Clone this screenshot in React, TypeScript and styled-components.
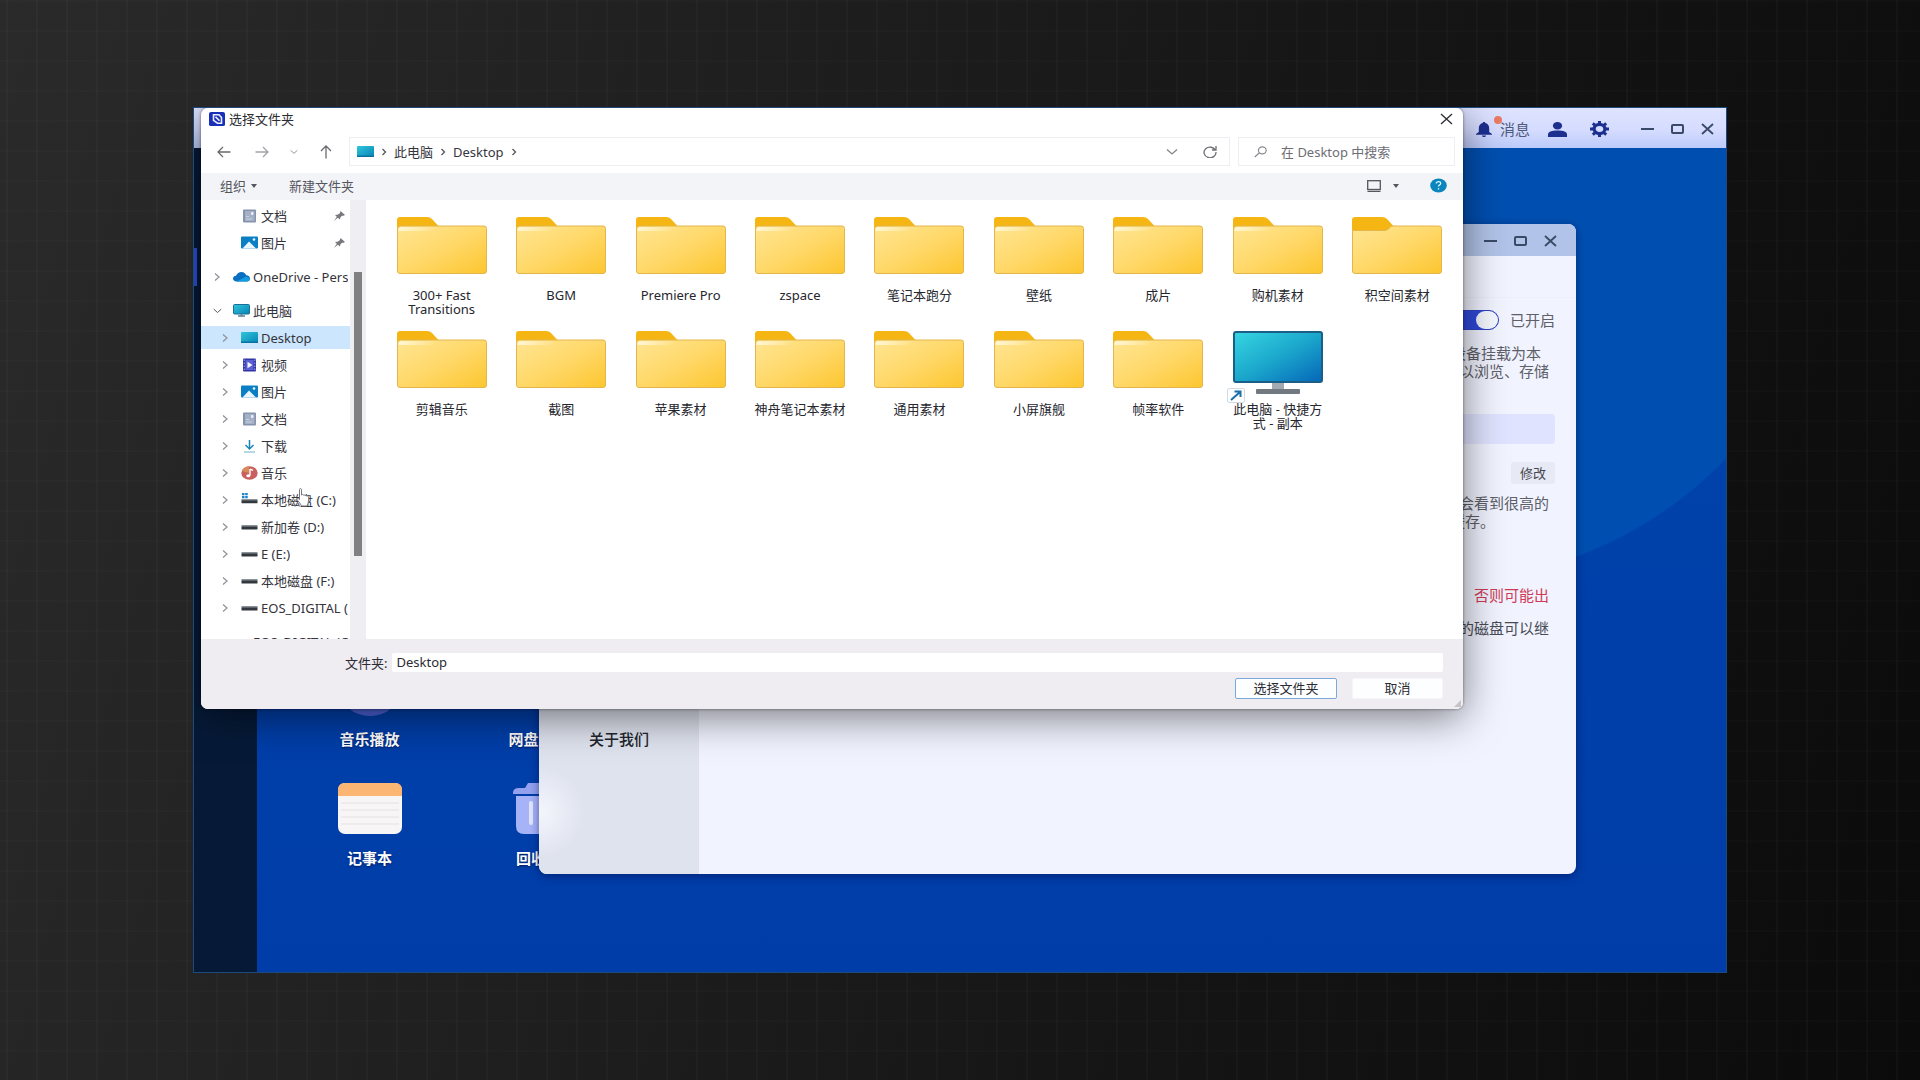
import React from "react";
import styled, { createGlobalStyle, css } from "styled-components";

const GlobalStyle = createGlobalStyle`
  * { box-sizing: border-box; }
  body {
    margin: 0;
    font-family: "Noto Sans", "Noto Sans CJK SC", sans-serif;
    font-size: 13px;
    line-height: 18px;
    color: #2b2b33;
  }
  button, input { font: inherit; color: inherit; }
  ul { list-style: none; margin: 0; padding: 0; }
  svg { display: block; flex: none; }
`;

/* ---------- stage and desktop ---------- */

const Stage = styled.div`
  min-height: 100vh;
  display: flex;
  padding: 107px 193px;
  background:
    repeating-linear-gradient(90deg, transparent 0 6px, rgba(255, 255, 255, 0.022) 6px 8px, transparent 8px 30px),
    repeating-linear-gradient(180deg, rgba(255, 255, 255, 0.01) 0 2px, transparent 2px 30px),
    linear-gradient(105deg, #2a2a2a 0%, #222222 25%, #131314 70%, #0b0b0c 100%);
`;

const Desktop = styled.main`
  position: relative;
  flex: 1;
  display: flex;
  flex-direction: column;
  overflow: hidden;
  border: 1px solid #1c4a7c;
  background:
    radial-gradient(circle at 81% 8%, #004fb0 404px, transparent 406px),
    linear-gradient(180deg, #0048ac 0%, #003fa9 60%, #003da8 100%);
`;

const TopBar = styled.header`
  display: flex;
  align-items: center;
  justify-content: flex-end;
  height: 40px;
  padding: 2px 12px 0 0;
  color: #1d2f8f;
  background: linear-gradient(180deg, #dfe3ff 0%, #d5dcff 55%, #bccafa 100%);
`;

const plainButton = css`
  display: flex;
  align-items: center;
  justify-content: center;
  padding: 0;
  border: 0;
  background: none;
`;

const MessageButton = styled.button`
  ${plainButton}
  position: relative;
  gap: 8px;
  margin-right: 18px;
  font-size: 15px;
  span { color: #4f5a7c; }
`;

const Dot = styled.i`
  position: absolute;
  left: 18px;
  top: -4px;
  width: 8px;
  height: 8px;
  border-radius: 50%;
  background: #ea7a63;
`;

const IconButton = styled.button<{ $w?: number }>`
  ${plainButton}
  width: ${(p) => (p.$w ? `${p.$w}px` : "auto")};
  height: 28px;
`;

const AppActions = styled.div`
  display: flex;
  align-items: center;
  gap: 23px;
  margin-right: 32px;
`;

const Controls = styled.div`
  display: flex;
  gap: 17px;
  color: #3a4a66;
`;

const DesktopBody = styled.div`
  flex: 1;
  display: flex;
`;

const Rail = styled.nav`
  width: 63px;
  padding-top: 100px;
  background: #061a38;
`;

const RailMark = styled.div`
  width: 3px;
  height: 38px;
  background: #2c50dc;
`;

const IconGrid = styled.ul`
  flex: 1;
  display: grid;
  grid-template-columns: repeat(auto-fill, 169px);
  grid-auto-rows: 119px;
  align-content: end;
  padding: 0 0 70px 28px;
`;

const DesktopIcon = styled.li`
  display: flex;
  flex-direction: column;
  align-items: center;
  gap: 13px;
  color: #ffffff;
  font-size: 15px;
  font-weight: 700;
  line-height: 20px;
  text-shadow: 0 1px 2px rgba(0, 0, 40, 0.6);
`;

/* ---------- settings window ---------- */

const Settings = styled.section`
  position: absolute;
  top: 116px;
  left: 345px;
  right: 150px;
  height: 650px;
  display: flex;
  flex-direction: column;
  overflow: hidden;
  border-radius: 8px;
  background: #f1f3ff;
  box-shadow: 0 2px 8px rgba(0, 10, 70, 0.5);
`;

const SettingsBar = styled.header`
  display: flex;
  align-items: center;
  justify-content: flex-end;
  height: 32px;
  padding: 2px 19px 0 0;
  background: #b1c3e8;
`;

const SettingsBody = styled.div`
  flex: 1;
  display: flex;
`;

const SettingsMenu = styled.nav`
  width: 160px;
  display: flex;
  flex-direction: column;
  align-items: center;
  justify-content: flex-end;
  padding-bottom: 124px;
  background:
    radial-gradient(circle at 0 90%, #f4f6fd 0, rgba(244, 246, 253, 0) 46px),
    #dfe3ee;
`;

const MenuLink = styled.a`
  color: #22242c;
  font-size: 15px;
  font-weight: 500;
  line-height: 22px;
  text-decoration: none;
`;

const SettingsMain = styled.div`
  flex: 1;
`;

const TabStrip = styled.div`
  height: 42px;
  border-bottom: 1px solid #eceef8;
`;

const Pane = styled.div`
  display: flex;
  flex-direction: column;
  align-items: flex-end;
  padding: 12px 21px 0;
  font-size: 15px;
  color: #5d6069;
`;

const ToggleLabel = styled.label`
  display: flex;
  align-items: center;
  gap: 11px;
  height: 20px;
`;

const Toggle = styled.input`
  appearance: none;
  display: flex;
  justify-content: flex-end;
  width: 46px;
  height: 20px;
  margin: 0;
  border: 1px solid #2f44c4;
  border-radius: 10px;
  background: #3049dc;
  &::before {
    content: "";
    width: 22px;
    height: 18px;
    border-radius: 9px;
    background: #f6f8ff;
  }
`;

const Note = styled.p<{ $gap: number; $red?: boolean; $dark?: boolean }>`
  display: flex;
  flex-direction: column;
  align-items: flex-end;
  margin: ${(p) => p.$gap}px 0 0;
  color: ${(p) => (p.$red ? "#cf3a55" : p.$dark ? "#4a4c55" : "#5d6069")};
`;

const NoteLine = styled.span<{ $trail?: number }>`
  padding-right: ${(p) => p.$trail ?? 6}px;
`;

const PathInput = styled.input`
  width: 100%;
  height: 30px;
  margin-top: 34px;
  border: 0;
  border-radius: 4px;
  background: #e0e3ff;
`;

const EditButton = styled.button`
  ${plainButton}
  width: 44px;
  height: 22px;
  margin-top: 18px;
  border-radius: 3px;
  background: #e7e9f4;
  color: #44474f;
  font-size: 13px;
`;

/* ---------- folder dialog ---------- */

const Dialog = styled.section`
  position: absolute;
  top: 0;
  left: 7px;
  right: 263px;
  height: 601px;
  display: flex;
  flex-direction: column;
  overflow: hidden;
  border-radius: 7px;
  background: #ffffff;
`;

const DialogShadow = styled.div`
  position: absolute;
  top: 0;
  left: 7px;
  right: 263px;
  height: 601px;
  border-radius: 7px;
  box-shadow: 0 8px 40px rgba(0, 0, 0, 0.5), 0 0 3px rgba(0, 0, 0, 0.5);
`;

const TitleBar = styled.header`
  display: flex;
  align-items: center;
  gap: 4px;
  height: 22px;
  padding: 0 10px 0 8px;
`;

const Title = styled.h1`
  flex: 1;
  margin: 0;
  font-size: 13px;
  font-weight: 400;
  line-height: 18px;
`;

const NavRow = styled.div`
  display: flex;
  align-items: center;
  gap: 8px;
  height: 43px;
  padding: 0 8px;
  color: #6f6f76;
`;

const boxed = css`
  display: flex;
  align-items: center;
  height: 29px;
  border: 1px solid #eeeef2;
`;

const Address = styled.div`
  ${boxed}
  flex: 1;
  gap: 6px;
  padding: 0 7px;
`;

const Crumb = styled.button`
  ${plainButton}
  color: #35353d;
`;

const AddressTools = styled.div`
  display: flex;
  gap: 14px;
  margin-left: auto;
`;

const SearchBox = styled.label`
  ${boxed}
  gap: 14px;
  width: 217px;
  padding-left: 15px;
  color: #8a8a92;
`;

const SearchInput = styled.input`
  flex: 1;
  min-width: 0;
  padding: 0;
  border: 0;
  background: none;
  &::placeholder { color: #6d6d74; opacity: 1; }
`;

const Toolbar = styled.div`
  display: flex;
  align-items: center;
  height: 27px;
  padding: 0 16px 2px 19px;
  background: #f3f4f8;
  color: #55555e;
`;

const ToolButton = styled.button<{ $end?: number; $push?: boolean }>`
  ${plainButton}
  gap: 5px;
  margin-left: ${(p) => (p.$push ? "auto" : "0")};
  margin-right: ${(p) => p.$end ?? 0}px;
`;

const ViewButton = styled(ToolButton)`
  gap: 12px;
`;

const DialogBody = styled.div`
  flex: 1;
  min-height: 0;
  display: flex;
`;

const Tree = styled.ul`
  width: 149px;
  overflow: hidden;
  padding-top: 2px;
`;

const TreeRow = styled.li<{ $child?: boolean; $selected?: boolean; $spaced?: boolean }>`
  display: flex;
  align-items: center;
  height: 27px;
  margin-top: ${(p) => (p.$spaced ? 7 : 0)}px;
  padding: 0 2px 0 ${(p) => (p.$child ? 20 : 12)}px;
  border: solid #ffffff;
  border-width: 2px 0;
  background: ${(p) => (p.$selected ? "#cbe6fd" : "transparent")};
  color: #34343c;
  line-height: 16px;
  white-space: nowrap;
`;

const TreeChevron = styled.span`
  width: 8px;
  margin-right: 12px;
  color: #909098;
`;

const TreeName = styled.span`
  flex: 1;
  min-width: 0;
  overflow: hidden;
  margin-left: 3px;
`;

const PinMark = styled.span`
  margin-right: 3px;
`;

const ScrollTrack = styled.div`
  width: 16px;
  padding: 72px 4px 0;
  background: #efeff3;
`;

const ScrollThumb = styled.div`
  height: 284px;
  background: #808083;
`;

const Files = styled.ul`
  flex: 1;
  display: grid;
  grid-template-columns: repeat(9, 1fr);
  grid-auto-rows: 114px;
  padding: 17px 6px 0 16px;
`;

const FileTile = styled.li`
  display: flex;
  flex-direction: column;
  align-items: center;
  gap: 7px;
  color: #26262e;
  line-height: 14px;
  text-align: center;
`;

const FileArt = styled.div`
  position: relative;
  height: 64px;
`;

const ShortcutBadge = styled.span`
  position: absolute;
  left: -6px;
  bottom: -8px;
`;

const FileName = styled.span`
  width: 94px;
`;

const Footer = styled.footer`
  display: flex;
  flex-direction: column;
  gap: 6px;
  height: 70px;
  padding: 14px 20px 0 144px;
  background: #efedf1;
`;

const FieldRow = styled.div`
  display: flex;
  align-items: center;
  gap: 5px;
  height: 19px;
`;

const FolderInput = styled.input`
  flex: 1;
  height: 19px;
  padding: 0 4px 2px;
  border: 0;
  border-radius: 2px;
  background: #ffffff;
`;

const ActionRow = styled.div`
  display: flex;
  justify-content: flex-end;
  gap: 15px;
`;

const ActionButton = styled.button<{ $primary?: boolean }>`
  ${plainButton}
  width: ${(p) => (p.$primary ? 102 : 91)}px;
  height: 21px;
  padding-bottom: 1px;
  border: 1px solid ${(p) => (p.$primary ? "#7ba9dc" : "#f6f6f8")};
  border-radius: 2px;
  background: #fdfeff;
`;

const Grip = styled.span`
  position: absolute;
  right: 2px;
  bottom: 2px;
`;

const Pointer = styled.div`
  position: absolute;
  left: 102px;
  top: 380px;
`;

/* ---------- drawings ---------- */

const Minus = () => (
  <svg width="13" height="12" viewBox="0 0 13 12"><path d="M0 6h13" stroke="currentColor" strokeWidth="2" /></svg>
);
const Maximize = () => (
  <svg width="13" height="12" viewBox="0 0 13 12"><rect x="1" y="2" width="11" height="8" rx="1" fill="none" stroke="currentColor" strokeWidth="2" /></svg>
);
const Cross = ({ thin }: { thin?: boolean }) => (
  <svg width="13" height="12" viewBox="0 0 13 12"><path d="M1 1l11 10M12 1L1 11" stroke="currentColor" strokeWidth={thin ? 1.3 : 1.8} /></svg>
);
const Bell = () => (
  <svg width="16" height="15" viewBox="0 0 16 15" fill="currentColor">
    <path d="M8 0c.8 0 1.3.5 1.4 1.1C12 1.700 13.200 3.800 13.200 6.200V10L16 12v.8H0V12l2.800-2V6.200C2.800 3.800 4 1.700 6.600 1.100 6.700.5 7.200 0 8 0zM6 13.400h4c-.2 1-1 1.600-2 1.600s-1.800-.6-2-1.600z" />
  </svg>
);
const Person = () => (
  <svg width="19" height="15" viewBox="0 0 19 15" fill="currentColor">
    <ellipse cx="9.500" cy="3.800" rx="4.600" ry="3.800" />
    <path d="M0 15v-2.500C0 10 3.500 8.600 9.500 8.600S19 10 19 12.500V15z" />
  </svg>
);
const Gear = () => (
  <svg width="19" height="16" viewBox="0 0 19 16">
    <g fill="none" stroke="currentColor">
      <ellipse cx="9.500" cy="8" rx="5.400" ry="4.600" strokeWidth="3.200" />
      <path d="M9.500 0v3M9.500 13v3M0 8h3M16 8h3M2.800 2.400l2.400 2M13.800 11.600l2.400 2M16.200 2.400l-2.400 2M5.200 11.600l-2.400 2" strokeWidth="3" />
    </g>
  </svg>
);
const Logo = () => (
  <svg width="16" height="14" viewBox="0 0 16 15" preserveAspectRatio="none">
    <rect width="16" height="15" rx="2" fill="#1a2fb8" />
    <path d="M4.500 3h5.500l2.500 3v6H8.500L4.500 9z" fill="none" stroke="#e8ecff" strokeWidth="1.600" />
    <path d="M6.500 5l4 4.500" stroke="#e8ecff" strokeWidth="1.600" />
  </svg>
);
const Arrow = ({ turn, faint }: { turn: number; faint?: boolean }) => (
  <svg width="14" height="14" viewBox="0 0 14 14" fill="none" stroke={faint ? "#a2a2a8" : "#6a6a70"} strokeWidth="1.300" transform={`rotate(${turn})`}>
    <path d="M13.500 7H1M6 2L1 7l5 5" />
  </svg>
);
const ChevronDown = ({ w = 12, color = "#85858c" }: { w?: number; color?: string }) => (
  <svg width={w} height="8" viewBox="0 0 12 8" fill="none" stroke={color} strokeWidth="1.300"><path d="M1 1.500l5 4.500 5-4.500" /></svg>
);
const ChevronRight = ({ color = "#909098" }: { color?: string }) => (
  <svg width="8" height="8" viewBox="0 0 8 8" fill="none" stroke={color} strokeWidth="1.200"><path d="M2 0.500L6 4 2 7.500" /></svg>
);
const Crumbs = () => (
  <svg width="8" height="8" viewBox="0 0 8 8" fill="none" stroke="#55555c" strokeWidth="1.300"><path d="M2.500 1L5.500 4l-3 3" /></svg>
);
const Refresh = () => (
  <svg width="14" height="13" viewBox="0 0 14 13" fill="none" stroke="#6f6f76" strokeWidth="1.300"><path d="M12.600 5.500A6 5.300 0 1 0 13 7M13 1v4H9" /></svg>
);
const Magnifier = () => (
  <svg width="13" height="12" viewBox="0 0 13 12" fill="none" stroke="currentColor" strokeWidth="1.200"><ellipse cx="8.300" cy="4.300" rx="3.900" ry="3.500" /><path d="M5.400 6.800L.8 11" /></svg>
);
const Caret = () => (
  <svg width="6" height="4" viewBox="0 0 6 4"><path d="M0 0h6L3 4z" fill="#55555e" /></svg>
);
const ViewIcon = () => (
  <svg width="14" height="12" viewBox="0 0 14 12" fill="none" stroke="#55555e"><rect x=".7" y=".7" width="12.600" height="8.800" strokeWidth="1.300" /><path d="M.5 11.300h13" strokeWidth="1.200" /></svg>
);
const Help = () => (
  <svg width="17" height="15" viewBox="0 0 17 15">
    <ellipse cx="8.500" cy="7.500" rx="8.300" ry="7" fill="#0a86bd" />
    <path d="M6.300 5.600c0-1.300 1-2 2.200-2s2.200.7 2.200 1.800c0 1.500-2.200 1.500-2.200 3.200M8.500 10v1.500" fill="none" stroke="#d5f2ff" strokeWidth="1.300" />
  </svg>
);
const Pin = () => (
  <svg width="11" height="10" viewBox="0 0 11 10" fill="#77777e"><path d="M6.500 0L11 4 9.500 4.800 8 4.700 6.300 6.500 6 8.500 3.800 6.700 0 10l2.800-4.200L1 4l2.500-.2L5.800 2.200z" /></svg>
);

const DesktopGlyph = () => (
  <svg width="17" height="13" viewBox="0 0 17 13">
    <defs><linearGradient id="deskG" x1="0" y1="0" x2="1" y2="1"><stop offset="0" stopColor="#2fc6dc" /><stop offset="1" stopColor="#0883b4" /></linearGradient></defs>
    <rect y="1" width="17" height="11" rx="1" fill="url(#deskG)" /><rect y="10.500" width="17" height="1.500" fill="#08739f" />
  </svg>
);
const PcGlyph = () => (
  <svg width="17" height="13" viewBox="0 0 17 13">
    <rect x=".5" y=".5" width="16" height="9.500" rx="1" fill="url(#deskG)" stroke="#1b6f96" /><path d="M5 12h7M8.500 10v2" stroke="#5d7f90" strokeWidth="1.500" />
  </svg>
);
const CloudGlyph = () => (
  <svg width="17" height="13" viewBox="0 0 17 13">
    <path d="M3.500 11.500C1.500 11.500 0 10.300 0 8.600 0 7 1.300 5.900 3 5.800 4 3.500 6 2 8.500 2c2.300 0 4 1.300 4.700 3.300C15.500 5.300 17 6.700 17 8.500c0 1.800-1.300 3-3.200 3z" fill="#0a6fc0" />
    <path d="M3.500 11.500L13 6.500l4 2c0 1.800-1.300 3-3.200 3z" fill="#159be0" />
  </svg>
);
const DocGlyph = () => (
  <svg width="17" height="14" viewBox="0 0 17 14"><rect x="2" y=".5" width="13" height="13" rx="1" fill="#8593ac" /><rect x="4" y="2" width="9.500" height="10" fill="#a3b0c6" /><path d="M10.500 3.500h1.500v2h-1.500z" fill="#e7edf6" stroke="#e7edf6" /><path d="M5 7.500h3M5 10h6" stroke="#c5d0e0" /></svg>
);
const PictureGlyph = () => (
  <svg width="17" height="13" viewBox="0 0 17 13"><rect y=".5" width="17" height="12" rx="1" fill="#0b7fc4" /><path d="M1.500 12.500L8 5.500l7 7z" fill="#eaf6ff" /><circle cx="13" cy="3.500" r="1.300" fill="#eaf6ff" /></svg>
);
const VideoGlyph = () => (
  <svg width="17" height="14" viewBox="0 0 17 14"><rect x="2" y=".5" width="13" height="13" rx="1" fill="#3235a5" /><rect x="4.500" y="2" width="8" height="10" fill="#5a60d2" /><path d="M6.500 3.800l5 3.200-5 3.200z" fill="#f2f3ff" /><path d="M3.200 1.500v11M13.800 1.500v11" stroke="#a3a7ee" strokeDasharray="1.500 1.500" /></svg>
);
const DownloadGlyph = () => (
  <svg width="17" height="14" viewBox="0 0 17 14" fill="none"><path d="M8.500 1v8.500M4.500 6l4 4 4-4" stroke="#1a84b8" strokeWidth="1.500" /><path d="M3 13h11" stroke="#8fc3cf" strokeWidth="1.300" /></svg>
);
const MusicGlyph = () => (
  <svg width="17" height="14" viewBox="0 0 17 14"><ellipse cx="8.500" cy="7" rx="8.200" ry="6.800" fill="#c9605f" /><path d="M1 5a8.200 6.800 0 0 1 7-4.800V7z" fill="#d98a58" /><path d="M9 3v6.500M9 3.200l3 1.200" stroke="#fff" strokeWidth="1.400" fill="none" /><ellipse cx="7.300" cy="9.700" rx="2" ry="1.500" fill="#fff" /></svg>
);
const DriveGlyph = () => (
  <svg width="17" height="13" viewBox="0 0 17 13"><rect x=".5" y="5" width="16" height="2" fill="#8c9298" /><rect x=".5" y="6.500" width="16" height="3" rx=".5" fill="#33383f" /></svg>
);
const SystemDriveGlyph = () => (
  <svg width="17" height="13" viewBox="0 0 17 13"><path d="M1 0h2.500v2.300H1zM4.200 0h2.500v2.300H4.200zM1 3h2.500v2.300H1zM4.200 3h2.500v2.300H4.200z" fill="#1a84c8" /><rect x=".5" y="6" width="16" height="1.500" fill="#8c9298" /><rect x=".5" y="7.200" width="16" height="3" rx=".5" fill="#33383f" /></svg>
);

const FolderArt = ({ plain }: { plain?: boolean }) => (
  <svg width="90" height="58" viewBox="0 0 90 58">
    <defs>
      <linearGradient id="folderG" x1="0" y1="0" x2="1" y2="1"><stop offset="0" stopColor="#ffe592" /><stop offset=".5" stopColor="#ffd869" /><stop offset="1" stopColor="#fcc62f" /></linearGradient>
      <linearGradient id="shineG" x1="0" y1="0" x2="1" y2="0"><stop offset="0" stopColor="#fff6d2" /><stop offset="1" stopColor="#fff6d2" stopOpacity="0" /></linearGradient>
    </defs>
    <path d="M0 3q0-3 3-3h27q3 0 5 2l6 6.500V20H0z" fill="#f5b613" />
    {plain ? (
      <path d="M.5 13.500H32q3 0 5-2l2.500-2.500H87q2.500 0 2.500 2.500V54q0 2.500-2.500 2.500H3Q.5 56.500.5 54z" fill="url(#folderG)" stroke="#e2b64c" />
    ) : (
      <>
        <path d="M.5 12q0-3 3-3H87q2.500 0 2.500 2.500V54q0 2.500-2.500 2.500H3Q.5 56.500.5 54z" fill="url(#folderG)" stroke="#e2b64c" />
        <path d="M1.500 13q0-3 3-3H40l-6 4H1.500z" fill="url(#shineG)" />
      </>
    )}
  </svg>
);
const MonitorArt = () => (
  <svg width="90" height="64" viewBox="0 0 90 64">
    <defs><linearGradient id="monG" x1="0" y1="0" x2="1" y2="1"><stop offset="0" stopColor="#37d6e2" /><stop offset=".5" stopColor="#1ba7cc" /><stop offset="1" stopColor="#0566b8" /></linearGradient></defs>
    <rect x="39" y="50" width="12" height="9" fill="#a3aab2" />
    <rect x="23" y="58" width="44" height="5" rx="1" fill="#737980" />
    <rect x="1" y="1" width="88" height="50" rx="2" fill="url(#monG)" stroke="#1b5f86" strokeWidth="2" />
  </svg>
);
const ShortcutArt = () => (
  <svg width="18" height="15" viewBox="0 0 18 15"><rect x=".5" y=".5" width="17" height="14" rx="1.500" fill="#fbfdff" stroke="#d5dbe2" /><path d="M4 12l9-8M7.500 3.500H13.500V9" fill="none" stroke="#1c6fa8" strokeWidth="2" /></svg>
);

const MusicPlayerArt = () => (
  <svg width="64" height="52" viewBox="0 0 64 52"><ellipse cx="32" cy="26" rx="30" ry="26" fill="#4d62d8" /><ellipse cx="32" cy="26" rx="10" ry="9" fill="#c8d0ff" /></svg>
);
const CloudDiskArt = () => (
  <svg width="64" height="52" viewBox="0 0 64 52"><path d="M14 42a12 12 0 0 1 0-24 18 16 0 0 1 34-2 13 13 0 0 1 2 26z" fill="#8fa6ff" /></svg>
);
const NotebookArt = () => (
  <svg width="64" height="52" viewBox="0 0 64 52">
    <rect width="64" height="51" rx="7" fill="#f7f5f6" />
    <path d="M0 13V7q0-7 7-7h50q7 0 7 7v6z" fill="#fbb673" />
    <path d="M3 20h58M3 27h58M3 34h58M3 41h58" stroke="#e6e1e2" />
  </svg>
);
const TrashArt = () => (
  <svg width="52" height="52" viewBox="0 0 52 52">
    <path d="M0 10q0-5 6-5h6l3-5h22l3 5h6q6 0 6 5v1H0z" fill="#93a1ee" />
    <path d="M3 13h46v30q0 8-8 8H11q-8 0-8-8z" fill="#a7b3f7" />
    <path d="M18 20v20M34 20v20" stroke="#dfe5ff" strokeWidth="4" strokeLinecap="round" />
  </svg>
);
const HandArt = () => (
  <svg width="14" height="19" viewBox="0 0 14 19"><path d="M3.500 1.500c0-1.200 2-1.200 2 0V7c1-.8 2-.5 2.300.3 1-.5 2-.2 2.200.6 1.500-.5 2.500.2 2.500 1.600 0 2.500.3 5-1.500 8.500H5.500C4.500 15 1.500 13 1 11.500c-.3-1.300 1-1.500 2.500 0z" fill="#ffffff" stroke="#77777c" strokeWidth="1" /></svg>
);

/* ---------- data ---------- */

type Node = { name: string; icon: React.ReactNode; level: 0 | 1; mark?: "closed" | "open" | "pin"; spaced?: boolean; selected?: boolean };

const tree: Node[] = [
  { name: "文档", icon: <DocGlyph />, level: 1, mark: "pin" },
  { name: "图片", icon: <PictureGlyph />, level: 1, mark: "pin" },
  { name: "OneDrive - Personal", icon: <CloudGlyph />, level: 0, mark: "closed", spaced: true },
  { name: "此电脑", icon: <PcGlyph />, level: 0, mark: "open", spaced: true },
  { name: "Desktop", icon: <DesktopGlyph />, level: 1, mark: "closed", selected: true },
  { name: "视频", icon: <VideoGlyph />, level: 1, mark: "closed" },
  { name: "图片", icon: <PictureGlyph />, level: 1, mark: "closed" },
  { name: "文档", icon: <DocGlyph />, level: 1, mark: "closed" },
  { name: "下载", icon: <DownloadGlyph />, level: 1, mark: "closed" },
  { name: "音乐", icon: <MusicGlyph />, level: 1, mark: "closed" },
  { name: "本地磁盘 (C:)", icon: <SystemDriveGlyph />, level: 1, mark: "closed" },
  { name: "新加卷 (D:)", icon: <DriveGlyph />, level: 1, mark: "closed" },
  { name: "E (E:)", icon: <DriveGlyph />, level: 1, mark: "closed" },
  { name: "本地磁盘 (F:)", icon: <DriveGlyph />, level: 1, mark: "closed" },
  { name: "EOS_DIGITAL (G:)", icon: <DriveGlyph />, level: 1, mark: "closed" },
  { name: "EOS_DIGITAL (G:)", icon: <DriveGlyph />, level: 0, spaced: true },
];

const folders = [
  "300+ Fast Transitions", "BGM", "Premiere Pro", "zspace", "笔记本跑分", "壁纸", "成片", "购机素材", "积空间素材",
  "剪辑音乐", "截图", "苹果素材", "神舟笔记本素材", "通用素材", "小屏旗舰", "帧率软件",
];

const WindowControls = () => (
  <Controls>
    <IconButton $w={13} aria-label="最小化"><Minus /></IconButton>
    <IconButton $w={13} aria-label="最大化"><Maximize /></IconButton>
    <IconButton $w={13} aria-label="关闭"><Cross /></IconButton>
  </Controls>
);

const TreeItem = ({ node }: { node: Node }) => (
  <TreeRow $child={node.level === 1} $selected={node.selected} $spaced={node.spaced}>
    <TreeChevron>
      {node.mark === "closed" && <ChevronRight />}
      {node.mark === "open" && <ChevronDown w={9} color="#55555c" />}
    </TreeChevron>
    {node.icon}
    <TreeName>{node.name}</TreeName>
    {node.mark === "pin" && <PinMark><Pin /></PinMark>}
  </TreeRow>
);

export default function App() {
  return (
    <Stage>
      <GlobalStyle />
      <Desktop>
        <TopBar>
          <MessageButton>
            <Bell />
            <Dot />
            <span>消息</span>
          </MessageButton>
          <AppActions>
            <IconButton aria-label="用户"><Person /></IconButton>
            <IconButton aria-label="设置"><Gear /></IconButton>
          </AppActions>
          <WindowControls />
        </TopBar>
        <DesktopBody>
          <Rail><RailMark /></Rail>
          <IconGrid>
            <DesktopIcon><MusicPlayerArt />音乐播放</DesktopIcon>
            <DesktopIcon><CloudDiskArt />网盘备份</DesktopIcon>
            <li /><li /><li /><li /><li />
            <li />
            <DesktopIcon><NotebookArt />记事本</DesktopIcon>
            <DesktopIcon><TrashArt />回收站</DesktopIcon>
          </IconGrid>
        </DesktopBody>

        <Settings>
          <SettingsBar><WindowControls /></SettingsBar>
          <SettingsBody>
            <SettingsMenu><MenuLink href="#about">关于我们</MenuLink></SettingsMenu>
            <SettingsMain>
              <TabStrip />
              <Pane>
                <ToggleLabel>
                  <Toggle type="checkbox" defaultChecked />
                  已开启
                </ToggleLabel>
                <Note $gap={14}>
                  <NoteLine $trail={14}>设备挂载为本</NoteLine>
                  <NoteLine>以浏览、存储</NoteLine>
                </Note>
                <PathInput aria-label="挂载路径" />
                <EditButton>修改</EditButton>
                <Note $gap={10}>
                  <NoteLine>会看到很高的</NoteLine>
                  <NoteLine $trail={60}>缓存。</NoteLine>
                </Note>
                <Note $gap={56} $red><NoteLine>否则可能出</NoteLine></Note>
                <Note $gap={15} $dark><NoteLine>的磁盘可以继</NoteLine></Note>
              </Pane>
            </SettingsMain>
          </SettingsBody>
        </Settings>

        <DialogShadow />
        <Dialog role="dialog" aria-label="选择文件夹">
          <TitleBar>
            <Logo />
            <Title>选择文件夹</Title>
            <IconButton $w={13} aria-label="关闭"><Cross thin /></IconButton>
          </TitleBar>
          <NavRow>
            <IconButton $w={30} aria-label="后退"><Arrow turn={0} /></IconButton>
            <IconButton $w={30} aria-label="前进"><Arrow turn={180} faint /></IconButton>
            <IconButton $w={18} aria-label="最近位置"><ChevronDown w={8} /></IconButton>
            <IconButton $w={30} aria-label="上移"><Arrow turn={90} /></IconButton>
            <Address>
              <DesktopGlyph />
              <Crumbs />
              <Crumb>此电脑</Crumb>
              <Crumbs />
              <Crumb>Desktop</Crumb>
              <Crumbs />
              <AddressTools>
                <IconButton $w={24} aria-label="展开"><ChevronDown /></IconButton>
                <IconButton $w={24} aria-label="刷新"><Refresh /></IconButton>
              </AddressTools>
            </Address>
            <SearchBox>
              <Magnifier />
              <SearchInput aria-label="搜索" placeholder="在 Desktop 中搜索" />
            </SearchBox>
          </NavRow>
          <Toolbar>
            <ToolButton $end={32}>组织 <Caret /></ToolButton>
            <ToolButton>新建文件夹</ToolButton>
            <ViewButton $push $end={31} aria-label="视图"><ViewIcon /><Caret /></ViewButton>
            <ToolButton aria-label="帮助"><Help /></ToolButton>
          </Toolbar>
          <DialogBody>
            <Tree>
              {tree.map((node, i) => <TreeItem key={i} node={node} />)}
            </Tree>
            <ScrollTrack><ScrollThumb /></ScrollTrack>
            <Files>
              {folders.map((name, i) => (
                <FileTile key={name}>
                  <FileArt><FolderArt plain={i === 8} /></FileArt>
                  <FileName>{name}</FileName>
                </FileTile>
              ))}
              <FileTile>
                <FileArt>
                  <MonitorArt />
                  <ShortcutBadge><ShortcutArt /></ShortcutBadge>
                </FileArt>
                <FileName>此电脑 - 快捷方式 - 副本</FileName>
              </FileTile>
            </Files>
          </DialogBody>
          <Footer>
            <FieldRow>
              <label htmlFor="folder">文件夹:</label>
              <FolderInput id="folder" defaultValue="Desktop" />
            </FieldRow>
            <ActionRow>
              <ActionButton $primary>选择文件夹</ActionButton>
              <ActionButton>取消</ActionButton>
            </ActionRow>
          </Footer>
          <Grip>
            <svg width="7" height="7" viewBox="0 0 7 7"><path d="M7 0v7H0z" fill="#c5c3c8" /></svg>
          </Grip>
        </Dialog>
        <Pointer><HandArt /></Pointer>
      </Desktop>
    </Stage>
  );
}
